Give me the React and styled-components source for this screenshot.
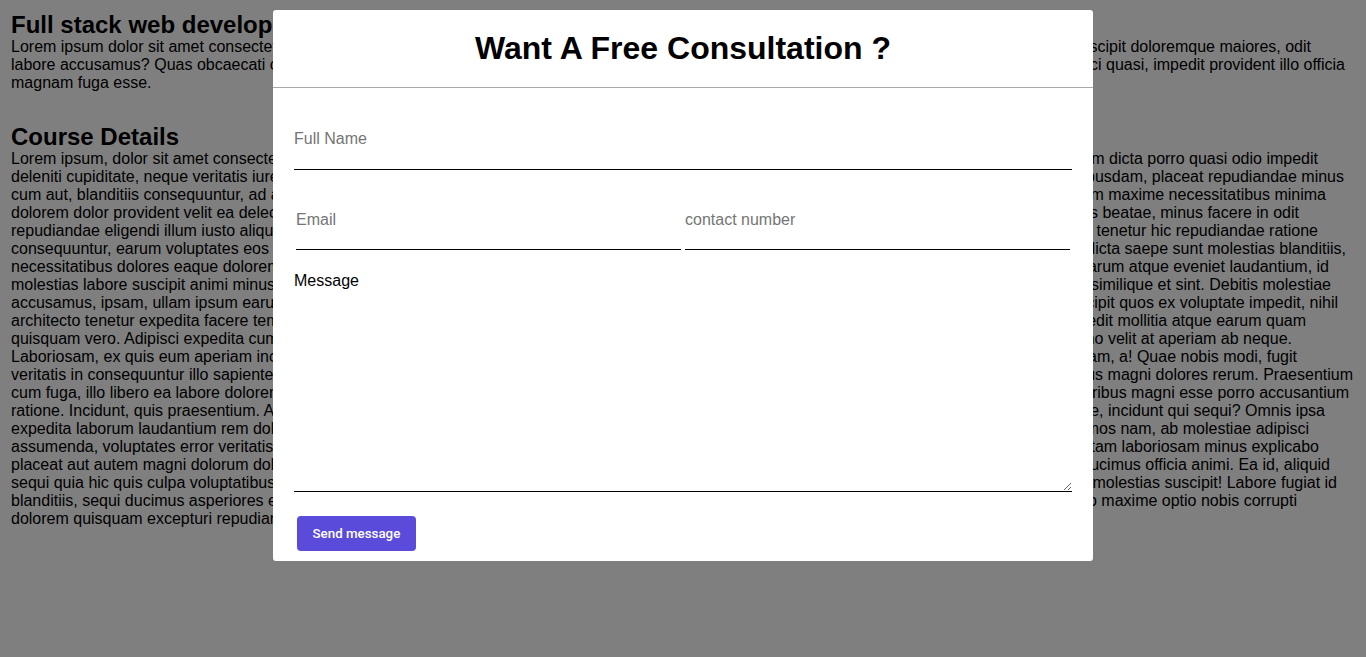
import React from 'react'
import styled, { createGlobalStyle } from 'styled-components'

const intro = [
  { left: 'Lorem ipsum dolor sit amet consectetur adipisicing elit.', right: 'Nemo suscipit doloremque maiores, odit', end: 1311 },
  { left: 'labore accusamus? Quas obcaecati cum', right: 'adipisci quasi, impedit provident illo officia', end: 1345 },
  { left: 'magnam fuga esse.' },
]

const details = [
  { left: 'Lorem ipsum, dolor sit amet consectetur adipisicing elit.', right: 'harum dicta porro quasi odio impedit', end: 1318 },
  { left: 'deleniti cupiditate, neque veritatis iure', right: 'quibusdam, placeat repudiandae minus', end: 1344 },
  { left: 'cum aut, blanditiis consequuntur, ad aut', right: 'totam maxime necessitatibus minima', end: 1326 },
  { left: 'dolorem dolor provident velit ea delectus', right: 'officiis beatae, minus facere in odit', end: 1299 },
  { left: 'repudiandae eligendi illum iusto aliquid', right: 'sit tenetur hic repudiandae ratione', end: 1318 },
  { left: 'consequuntur, earum voluptates eos', right: 'ut dicta saepe sunt molestias blanditiis,', end: 1346 },
  { left: 'necessitatibus dolores eaque dolorem', right: 'earum atque eveniet laudantium, id', end: 1329 },
  { left: 'molestias labore suscipit animi minus', right: 'ipsa similique et sint. Debitis molestiae', end: 1331 },
  { left: 'accusamus, ipsam, ullam ipsum earum', right: 'suscipit quos ex voluptate impedit, nihil', end: 1338 },
  { left: 'architecto tenetur expedita facere tempore', right: 'impedit mollitia atque earum quam', end: 1306 },
  { left: 'quisquam vero. Adipisci expedita cum', right: 'nemo velit at aperiam ab neque.', end: 1292 },
  { left: 'Laboriosam, ex quis eum aperiam incidunt', right: 'totam, a! Quae nobis modi, fugit', end: 1297 },
  { left: 'veritatis in consequuntur illo sapiente', right: 'minus magni dolores rerum. Praesentium', end: 1353 },
  { left: 'cum fuga, illo libero ea labore dolorem', right: 'temporibus magni esse porro accusantium', end: 1349 },
  { left: 'ratione. Incidunt, quis praesentium. A', right: 'recusandae, incidunt qui sequi? Omnis ipsa', end: 1325 },
  { left: 'expedita laborum laudantium rem dolor', right: 'dignissimos nam, ab molestiae adipisci', end: 1309 },
  { left: 'assumenda, voluptates error veritatis', right: 'totam laboriosam minus explicabo', end: 1319 },
  { left: 'placeat aut autem magni dolorum dolor', right: 'ducimus officia animi. Ea id, aliquid', end: 1330 },
  { left: 'sequi quia hic quis culpa voluptatibus', right: 'quae molestias suscipit! Labore fugiat id', end: 1337 },
  { left: 'blanditiis, sequi ducimus asperiores est', right: 'quo maxime optio nobis corrupti', end: 1297 },
  { left: 'dolorem quisquam excepturi repudiandae.' },
]

const Paragraph = ({ lines }) =>
  <Text>
    {
      lines.map(({ left, right, end }, i) =>
        <Line key={i} $end={end}>
          <LineStart>{left}</LineStart>
          {right && <LineEnd>{right}</LineEnd>}
        </Line>
      )
    }
  </Text>

const App = () =>
  <>
    <GlobalStyle />
    <Page>
      <Section>
        <Heading>Full stack web developer</Heading>
        <Paragraph lines={intro} />
      </Section>
      <Section $spaced>
        <Heading>Course Details</Heading>
        <Paragraph lines={details} />
      </Section>
    </Page>
    <Overlay>
      <Modal>
        <ModalHeader>
          <Title>Want A Free Consultation ?</Title>
        </ModalHeader>
        <Form onSubmit={e => e.preventDefault()}>
          <Input type="text" placeholder="Full Name" />
          <Row>
            <Input type="email" placeholder="Email" />
            <Input type="tel" placeholder="contact number" />
          </Row>
          <Message placeholder="Message" />
          <SendButton type="submit">Send message</SendButton>
        </Form>
      </Modal>
    </Overlay>
  </>

export default App

const GlobalStyle = createGlobalStyle`
  html, body {
    margin: 0;
    background: #fff;
    font-family: 'Liberation Sans', Arial, sans-serif;
    color: #000;
  }
`

const Page = styled.div`
  padding: 11px 11px 10px;
`

const Section = styled.section`
  margin-top: ${props => props.$spaced ? '31px' : '0'};
`

const Heading = styled.h2`
  margin: 0;
  font-size: 24px;
  line-height: 27px;
  font-weight: 700;
`

const Text = styled.div`
  font-size: 16px;
  line-height: 18px;
`

const Line = styled.div`
  display: flex;
  width: ${props => props.$end ? `${props.$end - 11}px` : '100%'};
  white-space: nowrap;
`

const LineStart = styled.span`
  flex: 1 1 0;
  min-width: 0;
  overflow: hidden;
`

const LineEnd = styled.span`
  flex: none;
`

const Overlay = styled.div`
  position: fixed;
  inset: 0;
  background: rgba(0, 0, 0, 0.5);
  display: flex;
  justify-content: center;
  align-items: flex-start;
  padding-top: 10px;
`

const Modal = styled.div`
  width: 820px;
  background: #fff;
  border-radius: 3px;
`

const ModalHeader = styled.div`
  padding: 20px 0;
  border-bottom: 1px solid #a9a9a9;
  text-align: center;
`

const Title = styled.h1`
  margin: 0;
  font-size: 32px;
  line-height: 37px;
  font-weight: 700;
`

const Form = styled.form`
  display: flex;
  flex-direction: column;
  align-items: flex-start;
  padding: 19px 21px 10px;
`

const Input = styled.input`
  box-sizing: border-box;
  width: 100%;
  height: 63px;
  margin: 0;
  padding: 2px 0 0;
  border: none;
  border-bottom: 1px solid #000;
  outline: none;
  font-family: 'Liberation Sans', Arial, sans-serif;
  font-size: 16px;
  color: #000;
  background: transparent;

  &::placeholder {
    color: #757575;
  }
`

const Row = styled.div`
  display: flex;
  width: 100%;
  margin-top: 17px;

  ${Input} {
    flex: 1;
    width: auto;
    min-width: 0;
    margin: 0 2px;
    padding-top: 4px;
  }
`

const Message = styled.textarea`
  box-sizing: border-box;
  width: 100%;
  height: 223px;
  margin-top: 19px;
  padding: 3px 0 2px;
  border: none;
  border-bottom: 1px solid #000;
  outline: none;
  font-family: 'Liberation Sans', Arial, sans-serif;
  font-size: 16px;
  line-height: 18px;
  color: #000;

  &::placeholder {
    color: #000;
  }
`

const SendButton = styled.button`
  margin: 24px 0 0 3px;
  height: 35px;
  padding: 0 15.5px;
  border: none;
  border-radius: 4px;
  background: #5b4bdb;
  color: #fff;
  font-family: Roboto, 'Liberation Sans', sans-serif;
  font-weight: 500;
  font-size: 13.333px;
  cursor: pointer;
`
